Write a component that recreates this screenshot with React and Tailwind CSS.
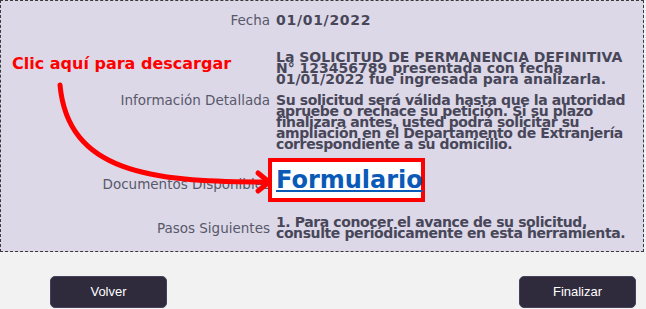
export default function App() {
  return (
    <div className="w-[646px] h-[309px] overflow-hidden bg-[#f2f2f2] font-['DejaVu_Sans',sans-serif]">
      {/* PANEL */}
      <div className="relative w-[644px] h-[252px] border border-dashed border-[#3a3a3a] bg-[#dcd8e8]">
        <div className="flex flex-col pt-[14px]">
          {/* FECHA */}
          <div className="flex gap-[6px]">
            <div className="w-[269px] text-right text-[13.5px] leading-[11px] text-[#58586a]">Fecha</div>
            <div className="w-[362px] text-[14px] leading-[11px] font-bold tracking-[0.7px] text-[#484759]">01/01/2022</div>
          </div>

          {/* SOLICITUD */}
          <div className="flex gap-[6px] mt-[26px]">
            <div className="w-[269px]" />
            <div className="w-[362px] whitespace-nowrap text-[14px] leading-[11px] font-bold text-[#484759]">
              La SOLICITUD DE PERMANENCIA DEFINITIVA<br />
              N° 123456789 presentada con fecha<br />
              01/01/2022 fue ingresada para analizarla.
            </div>
          </div>

          {/* INFORMACION */}
          <div className="flex gap-[6px] mt-[10px]">
            <div className="w-[269px] text-right text-[13.5px] leading-[11px] text-[#58586a]">Información Detallada</div>
            <div className="w-[362px] whitespace-nowrap text-[14px] leading-[11px] font-bold tracking-[-0.4px] text-[#484759]">
              Su solicitud será válida hasta que la autoridad<br />
              apruebe o rechace su petición. Si su plazo<br />
              finalizara antes, usted podrá solicitar su<br />
              ampliación en el Departamento de Extranjería<br />
              correspondiente a su domicilio.
            </div>
          </div>

          {/* DOCUMENTOS */}
          <div className="flex items-start gap-[6px] mt-[8px]">
            <div className="w-[269px] mt-[21px] text-right text-[13.5px] leading-[11px] text-[#58586a]">Documentos Disponibles</div>
            <div className="w-[362px]">
              <div className="-ml-[8px] w-[157px] h-[44px] border-4 border-[#ff0000] bg-white pl-[4px] flex items-center">
                <a href="#" className="text-[24px] leading-[28px] font-bold text-[#0a5bb8] underline">Formulario</a>
              </div>
            </div>
          </div>

          {/* PASOS */}
          <div className="flex items-start gap-[6px] mt-[15px]">
            <div className="w-[269px] mt-[6px] text-right text-[13.5px] leading-[11px] text-[#58586a]">Pasos Siguientes</div>
            <div className="w-[362px] whitespace-nowrap text-[14px] leading-[11px] font-bold tracking-[-0.4px] text-[#484759]">
              1. Para conocer el avance de su solicitud,<br />
              consulte periódicamente en esta herramienta.
            </div>
          </div>
        </div>

        {/* ANNOTATION */}
        <div className="absolute left-[11px] top-[53px] text-[16px] leading-[20px] font-bold text-[#ff0000]">
          Clic aquí para descargar
        </div>
        <svg className="absolute left-[-1px] top-[-1px] pointer-events-none" width="646" height="252" viewBox="0 0 646 252">
          <path d="M60 85 C68 172, 150 182, 264 182" fill="none" stroke="#ff0000" strokeWidth="5" strokeLinecap="round" />
          <path d="M258 173 L269 182 L258 191" fill="none" stroke="#ff0000" strokeWidth="5" strokeLinecap="round" strokeLinejoin="round" />
        </svg>
      </div>

      {/* BOTONES */}
      <div className="flex justify-between pl-[50px] pr-[10px] pt-[24px]">
        <button className="w-[117px] h-[32px] rounded-[5px] bg-[#2f2b3d] border border-[#45415a] text-white text-[13px] font-['Liberation_Sans',sans-serif]">
          Volver
        </button>
        <button className="w-[117px] h-[32px] rounded-[5px] bg-[#2f2b3d] border border-[#45415a] text-white text-[13px] font-['Liberation_Sans',sans-serif]">
          Finalizar
        </button>
      </div>
    </div>
  );
}
